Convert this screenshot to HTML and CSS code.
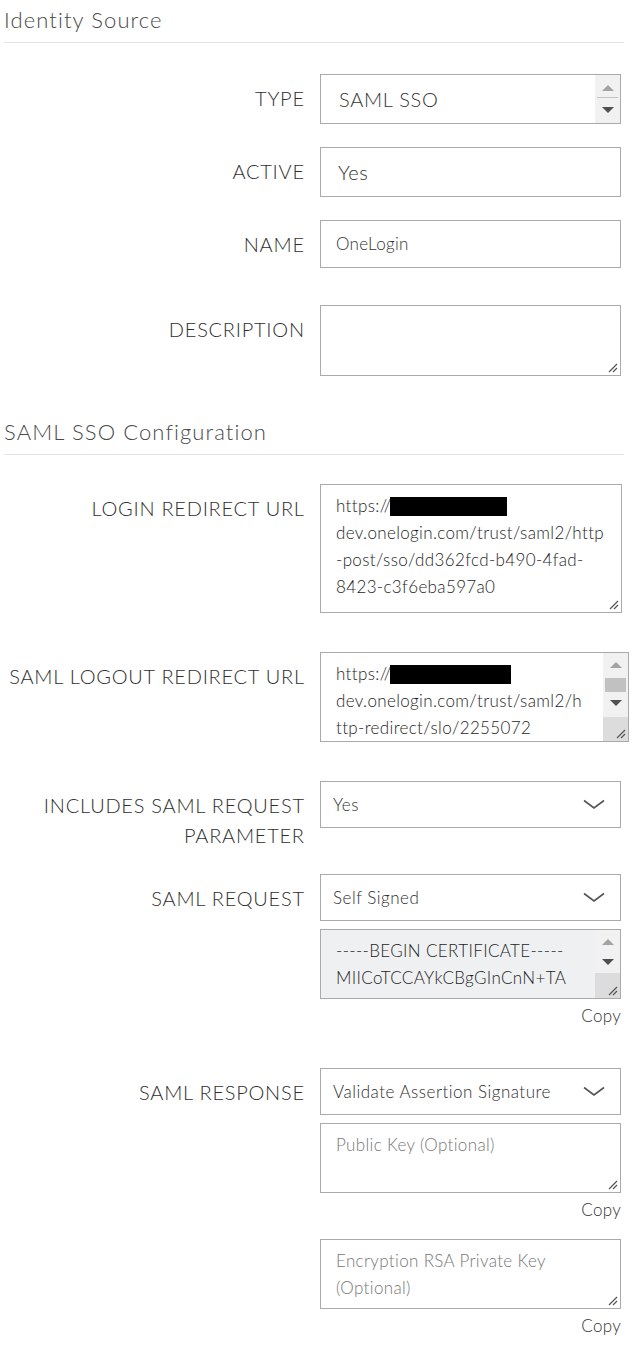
FILE: index.html
```html
<!DOCTYPE html>
<html>
<head>
<meta charset="utf-8">
<link rel="stylesheet" href="styles.css">
</head>
<body>
<div class="page">
  <h2 class="section-title">Identity Source</h2>

  <div class="row gap-31">
    <div class="label">TYPE</div>
    <div class="field">
      <div class="box listbox">
        <div class="lb-text">SAML SSO</div>
        <div class="sb sb-type">
          <span class="arr-up light"></span>
          <span class="sb-line"></span>
          <span class="arr-down"></span>
        </div>
      </div>
    </div>
  </div>

  <div class="row gap-23">
    <div class="label">ACTIVE</div>
    <div class="field">
      <div class="box input-lg">Yes</div>
    </div>
  </div>

  <div class="row gap-23">
    <div class="label">NAME</div>
    <div class="field">
      <div class="box input-sm">OneLogin</div>
    </div>
  </div>

  <div class="row gap-37">
    <div class="label">DESCRIPTION</div>
    <div class="field">
      <div class="box area area-desc">
        <svg class="grip" width="12" height="12" viewBox="0 0 12 12"><path d="M11 3 L3 11 M11 7 L7 11" stroke="#555" stroke-width="1.2" fill="none"/></svg>
      </div>
    </div>
  </div>

  <h2 class="section-title gap-36">SAML SSO Configuration</h2>

  <div class="row gap-29">
    <div class="label">LOGIN REDIRECT URL</div>
    <div class="field">
      <div class="box area area-login">
        <div class="area-text">
          <div class="ln">https://<span class="redact r-login"></span></div>
          <div class="ln">dev.onelogin.com/trust/saml2/http</div>
          <div class="ln">-post/sso/dd362fcd-b490-4fad-</div>
          <div class="ln">8423-c3f6eba597a0</div>
        </div>
        <svg class="grip" width="12" height="12" viewBox="0 0 12 12"><path d="M11 3 L3 11 M11 7 L7 11" stroke="#555" stroke-width="1.2" fill="none"/></svg>
      </div>
    </div>
  </div>

  <div class="row gap-39">
    <div class="label">SAML LOGOUT REDIRECT URL</div>
    <div class="field">
      <div class="box area area-logout">
        <div class="area-text">
          <div class="ln">https://<span class="redact r-logout"></span></div>
          <div class="ln">dev.onelogin.com/trust/saml2/h</div>
          <div class="ln">ttp-redirect/slo/2255072</div>
        </div>
        <div class="sb sb-logout">
          <span class="arr-up light"></span>
          <span class="thumb"></span>
          <span class="arr-down"></span>
          <span class="sb-fill"></span>
          <span class="resizer">
            <svg width="12" height="12" viewBox="0 0 12 12"><path d="M11 3 L3 11 M11 7 L7 11" stroke="#555" stroke-width="1.2" fill="none"/></svg>
          </span>
        </div>
      </div>
    </div>
  </div>

  <div class="row gap-39">
    <div class="label">INCLUDES SAML REQUEST<br>PARAMETER</div>
    <div class="field">
      <div class="box select">
        <span class="sel-text">Yes</span>
        <svg class="chev" width="22" height="11" viewBox="0 0 22 11"><path d="M1 1.5 L11 9 L21 1.5" stroke="#555" stroke-width="1.6" fill="none"/></svg>
      </div>
    </div>
  </div>

  <div class="row gap-24">
    <div class="label">SAML REQUEST</div>
    <div class="field">
      <div class="box select">
        <span class="sel-text">Self Signed</span>
        <svg class="chev" width="22" height="11" viewBox="0 0 22 11"><path d="M1 1.5 L11 9 L21 1.5" stroke="#555" stroke-width="1.6" fill="none"/></svg>
      </div>
      <div class="box area area-cert">
        <div class="area-text">
          <div class="ln">-----BEGIN CERTIFICATE-----</div>
          <div class="ln">MIICoTCCAYkCBgGInCnN+TA</div>
          <div class="ln">NBgkqhkiG9w0BAQsFADAUMR</div>
        </div>
        <div class="sb sb-cert">
          <span class="arr-up light"></span>
          <span class="arr-down"></span>
          <span class="sb-fill"></span>
          <span class="resizer">
            <svg width="12" height="12" viewBox="0 0 12 12"><path d="M11 3 L3 11 M11 7 L7 11" stroke="#555" stroke-width="1.2" fill="none"/></svg>
          </span>
        </div>
      </div>
      <div class="copy">Copy</div>
    </div>
  </div>

  <div class="row gap-42">
    <div class="label">SAML RESPONSE</div>
    <div class="field">
      <div class="box select">
        <span class="sel-text">Validate Assertion Signature</span>
        <svg class="chev" width="22" height="11" viewBox="0 0 22 11"><path d="M1 1.5 L11 9 L21 1.5" stroke="#555" stroke-width="1.6" fill="none"/></svg>
      </div>
      <div class="box area area-key">
        <div class="area-text placeholder">
          <div class="ln">Public Key (Optional)</div>
        </div>
        <svg class="grip" width="12" height="12" viewBox="0 0 12 12"><path d="M11 3 L3 11 M11 7 L7 11" stroke="#555" stroke-width="1.2" fill="none"/></svg>
      </div>
      <div class="copy">Copy</div>
      <div class="box area area-key area-enc">
        <div class="area-text placeholder">
          <div class="ln">Encryption RSA Private Key</div>
          <div class="ln">(Optional)</div>
        </div>
        <svg class="grip" width="12" height="12" viewBox="0 0 12 12"><path d="M11 3 L3 11 M11 7 L7 11" stroke="#555" stroke-width="1.2" fill="none"/></svg>
      </div>
      <div class="copy">Copy</div>
    </div>
  </div>
</div>
</body>
</html>
```

FILE: styles.css
```css
* { box-sizing: border-box; }

body {
  margin: 0;
  background: #fff;
  font-family: Lato, "Liberation Sans", sans-serif;
  color: #444;
}

.page {
  width: 620px;
  margin-left: 4px;
  padding-bottom: 20px;
}

.section-title {
  margin: 0;
  font-weight: 300;
  font-size: 22px;
  letter-spacing: 1.1px;
  line-height: 28px;
  padding: 6px 0 8px;
  border-bottom: 1px solid #e4e4e4;
  color: #4a4a4a;
}

.gap-23 { margin-top: 23px; }
.gap-24 { margin-top: 24px; }
.gap-29 { margin-top: 29px; }
.gap-31 { margin-top: 31px; }
.gap-36 { margin-top: 36px; }
.gap-37 { margin-top: 37px; }
.gap-39 { margin-top: 39px; }
.gap-42 { margin-top: 42px; }

.row {
  display: grid;
  grid-template-columns: 300px 301px;
  column-gap: 16px;
  align-items: start;
}

.label {
  text-align: right;
  font-size: 20px;
  letter-spacing: 0.75px;
  margin-right: -0.75px;
  line-height: 30px;
  padding-top: 9px;
  color: #2e2e2e;
  font-weight: 300;
}

.field {
  display: flex;
  flex-direction: column;
}

.box {
  border: 1px solid #aaa;
  background: #fff;
  position: relative;
}

/* listbox (TYPE) */
.listbox {
  height: 50px;
  display: flex;
}
.lb-text {
  flex: 1;
  padding-left: 18px;
  line-height: 48px;
  font-size: 20px;
  letter-spacing: 0.7px;
  font-weight: 300;
  color: #333;
}

/* scrollbars */
.sb {
  width: 25px;
  background: #f1f1f1;
  display: flex;
  flex-direction: column;
  align-items: center;
}
.arr-up {
  width: 0; height: 0;
  border-left: 6px solid transparent;
  border-right: 6px solid transparent;
  border-bottom: 6px solid #505050;
}
.arr-up.light { border-bottom-color: #a3a3a3; }
.arr-down {
  width: 0; height: 0;
  border-left: 6px solid transparent;
  border-right: 6px solid transparent;
  border-top: 6px solid #505050;
}
.sb-type { padding-top: 10px; }
.sb-type .sb-line {
  width: 21px;
  height: 1px;
  background: #c4c4c4;
  margin: 6px 0 9px;
}
.sb-fill { flex: 1; }
.resizer {
  width: 100%;
  background: #dcdcdc;
  display: flex;
  align-items: flex-end;
  justify-content: flex-end;
  padding: 0 2px 2px 0;
}
.sb-logout { padding-top: 9px; }
.sb-logout .thumb {
  width: 21px;
  height: 14px;
  background: #c1c1c1;
  margin: 10px 0 8px;
}
.sb-logout .resizer { height: 24px; }
.sb-cert { padding-top: 9px; background: #f1f1f1; }
.sb-cert .arr-down { margin-top: 14px; }
.sb-cert .resizer { height: 25px; }

/* inputs */
.input-lg {
  height: 50px;
  line-height: 48px;
  padding-left: 17px;
  font-size: 20px;
  letter-spacing: 0.5px;
  font-weight: 300;
  color: #333;
}
.input-sm {
  height: 48px;
  line-height: 46px;
  padding-left: 15px;
  font-size: 17px;
  letter-spacing: 0.3px;
  font-weight: 300;
  color: #333;
}

.select {
  height: 47px;
  display: flex;
  align-items: center;
  justify-content: space-between;
  padding: 0 15px 0 12px;
}
.sel-text {
  font-size: 17px;
  letter-spacing: 0.5px;
  font-weight: 300;
  color: #2e2e2e;
}
.chev { display: block; }

/* textareas */
.area { display: flex; overflow: hidden; }
.area-desc { height: 71px; }
.area-login { height: 129px; width: 302px; }
.area-logout { height: 90px; width: 309px; }
.area-cert { height: 70px; margin-top: 8px; background: #eff0f1; }
.area-key { height: 70px; margin-top: 8px; }
.area-enc { margin-top: 19px; }

.area-text {
  flex: 1;
  padding: 7px 0 0 15px;
  font-size: 17px;
  letter-spacing: 0.35px;
  line-height: 27px;
  font-weight: 300;
  color: #1e1e1e;
  overflow: hidden;
}
.ln { white-space: nowrap; }
.placeholder { color: #777; }

.redact {
  display: inline-block;
  height: 19px;
  background: #000;
  vertical-align: -4px;
}
.r-login { width: 117px; margin-left: -2px; }
.r-logout { width: 121px; margin-left: -2px; }

.grip {
  position: absolute;
  right: 2px;
  bottom: 2px;
}

.copy {
  margin-top: 7px;
  text-align: right;
  font-size: 17px;
  letter-spacing: 0.3px;
  line-height: 20px;
  font-weight: 300;
  color: #333;
}
```
